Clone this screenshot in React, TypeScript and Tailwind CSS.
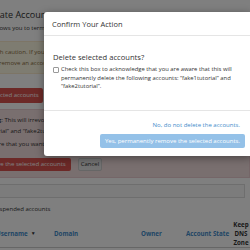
export default function App() {
  return (
    <div className="relative h-[250px] w-[250px] overflow-hidden bg-white font-['Open_Sans',sans-serif] text-[#333]">
      {/* page behind the dialog */}
      <div className="flex flex-col pt-[9px]">
        <h1 className="ml-[-30px] whitespace-nowrap text-[9px] leading-[12px] text-[#333]">
          Terminate Accounts
        </h1>
        <p className="ml-[-35px] mt-[3px] whitespace-nowrap text-[6px] leading-[8px]">
          This page allows you to terminate multiple accounts at once.
        </p>

        <div className="mt-[9px] ml-[-40px] border border-[#faebcc] bg-[#fcf8e3] pb-[4px] pt-[5px] text-[#8a6d3b]">
          <p className="ml-[6px] whitespace-nowrap text-[6px] leading-[11px]">
            Proceed with caution. If you accidentally
          </p>
          <p className="ml-[38px] whitespace-nowrap text-[6px] leading-[11px]">
            remove an account, you cannot restore it.
          </p>
        </div>

        <div className="mt-[14px] flex">
          <button className="ml-[-50px] h-[15px] rounded-[2px] bg-[#d9534f] px-[4px] text-[6px] leading-[15px] whitespace-nowrap text-white">
            Remove the selected accounts
          </button>
        </div>

        <div className="mt-[6px] ml-[-40px] border border-[#ebccd1] bg-[#f2dede] pb-[6px] pt-[5px] text-[#333]">
          <p className="ml-[15px] whitespace-nowrap text-[6px] leading-[11px]">
            <b>Warning</b>: This will irrevocably delete the following accounts:
          </p>
          <p className="ml-[8px] whitespace-nowrap text-[6px] leading-[11px]">
            “fake1tutorial” and “fake2tutorial”.
          </p>
          <p className="ml-[8px] mt-[2px] whitespace-nowrap text-[6px] leading-[11px]">
            Are you sure that you want to terminate these accounts?
          </p>
          <div className="mt-[8px] flex items-center gap-[7px]">
            <button className="ml-[16px] h-[13px] rounded-[2px] bg-[#d9534f] pl-[4px] pr-[5px] text-[6px] leading-[13px] whitespace-nowrap text-white">
              Remove the selected accounts
            </button>
            <button className="h-[13px] rounded-[2px] border border-[#ccc] bg-[#e6e6e6] px-[2px] text-[6px] leading-[11px] text-[#333]">
              Cancel
            </button>
          </div>
        </div>

        <div className="mt-[6px] ml-[-10px] mr-[5px] h-[14px] border border-[#ddd] bg-[#f9f9f9]" />

        <p className="ml-[-29px] mt-[7px] whitespace-nowrap text-[6px] leading-[8px]">
          Include suspended accounts
        </p>

        <div className="mt-[7px] flex items-center border-b border-[#ccc] text-[6.2px] font-bold leading-[9px]">
          <div className="ml-[-4px] flex w-[58px] items-center gap-[3px] text-[#428bca]">
            <span>Username</span>
            <span className="text-[5px] text-[#333]">▼</span>
          </div>
          <div className="w-[87px] text-[#428bca]">Domain</div>
          <div className="w-[45px] text-[#428bca]">Owner</div>
          <div className="w-[47px] whitespace-nowrap text-[#428bca]">Account State</div>
          <div className="flex w-[16px] flex-col items-center text-[#333]">
            <span>Keep</span>
            <span>DNS</span>
            <span>Zone</span>
          </div>
        </div>
      </div>

      {/* backdrop */}
      <div className="absolute inset-0 bg-black/50" />

      {/* dialog */}
      <div className="absolute left-[44px] top-[12px] w-[208px] rounded-[3px] bg-white shadow-[0_2px_8px_rgba(0,0,0,0.4)]">
        <div className="flex h-[24px] items-center border-b border-[#e5e5e5] px-[8px]">
          <h2 className="text-[7.5px] leading-[10px] text-[#333]">Confirm Your Action</h2>
        </div>
        <div className="pb-[19px] pl-[9px] pr-[4px] pt-[16px]">
          <h3 className="text-[7.6px] leading-[10px] text-[#333]">Delete selected accounts?</h3>
          <label className="mt-[3px] flex items-start gap-[2px] text-[5.85px] leading-[8.5px] text-[#333]">
            <span className="mt-[2px] h-[6px] w-[6px] shrink-0 rounded-[1px] border border-[#999] bg-white" />
            <span>
              Check this box to acknowledge that you are aware that this will permanently delete
              the following accounts: “fake1tutorial” and “fake2tutorial”.
            </span>
          </label>
        </div>
        <div className="flex flex-col items-end border-t border-[#e5e5e5] pb-[8px] pl-[8px] pr-[7px] pt-[10px]">
          <a className="mr-[5px] text-[6px] leading-[8px] text-[#428bca]">
            No, do not delete the accounts.
          </a>
          <button className="mt-[5px] h-[14px] rounded-[2px] bg-[#94c1e8] px-[5px] text-[6px] leading-[14px] whitespace-nowrap text-white">
            Yes, permanently remove the selected accounts.
          </button>
        </div>
      </div>
    </div>
  );
}
